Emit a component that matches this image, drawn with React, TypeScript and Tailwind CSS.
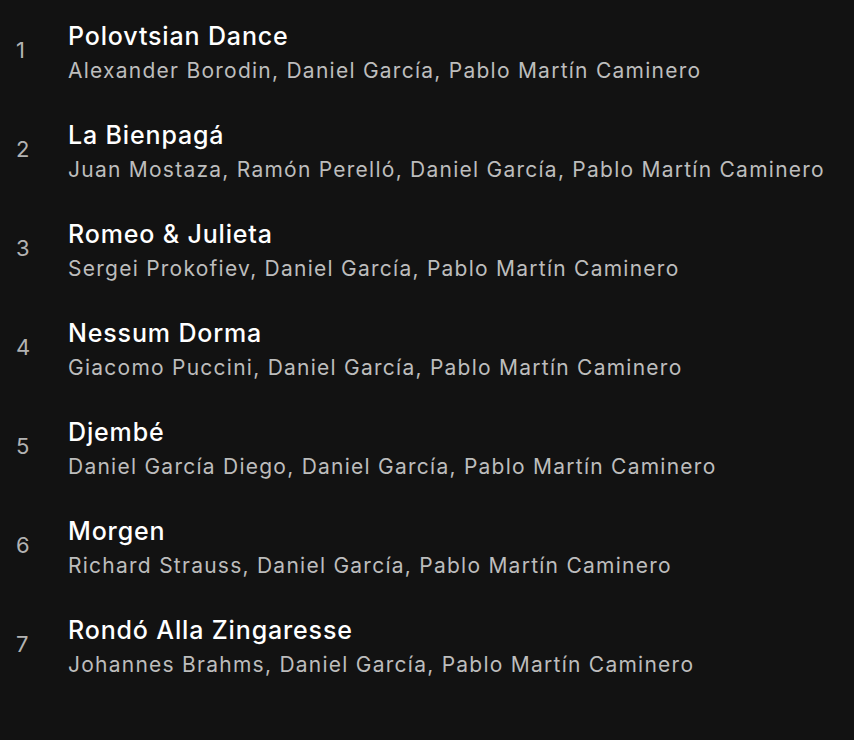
import React from 'react';

interface Track {
    title: string;
    artists: string;
}

const tracks: Track[] = [
    { title: 'Polovtsian Dance', artists: 'Alexander Borodin, Daniel García, Pablo Martín Caminero' },
    { title: 'La Bienpagá', artists: 'Juan Mostaza, Ramón Perelló, Daniel García, Pablo Martín Caminero' },
    { title: 'Romeo & Julieta', artists: 'Sergei Prokofiev, Daniel García, Pablo Martín Caminero' },
    { title: 'Nessum Dorma', artists: 'Giacomo Puccini, Daniel García, Pablo Martín Caminero' },
    { title: 'Djembé', artists: 'Daniel García Diego, Daniel García, Pablo Martín Caminero' },
    { title: 'Morgen', artists: 'Richard Strauss, Daniel García, Pablo Martín Caminero' },
    { title: 'Rondó Alla Zingaresse', artists: 'Johannes Brahms, Daniel García, Pablo Martín Caminero' },
];

const App: React.FC = () => {
    return (
        <div className="w-[854px] h-[740px] bg-[#121212] overflow-hidden" style={{ fontFamily: 'Inter, "Noto Sans", sans-serif' }}>
            <ol>
                {tracks.map((track, i) => (
                    <li key={i} className="h-[99px] flex pt-[19px]">
                        <div className="w-[68px] pl-[16px] pt-[16px] text-[22px] leading-[30px] text-[#b3b3b3]">{i + 1}</div>
                        <div className="flex flex-col">
                            <div className="text-[25px] leading-[34px] font-medium text-white tracking-[0.85px]">{track.title}</div>
                            <div className="mt-[3px] text-[21px] leading-[30px] text-[#bdbdbd] tracking-[1.25px]">{track.artists}</div>
                        </div>
                    </li>
                ))}
            </ol>
        </div>
    );
};

export default App;
